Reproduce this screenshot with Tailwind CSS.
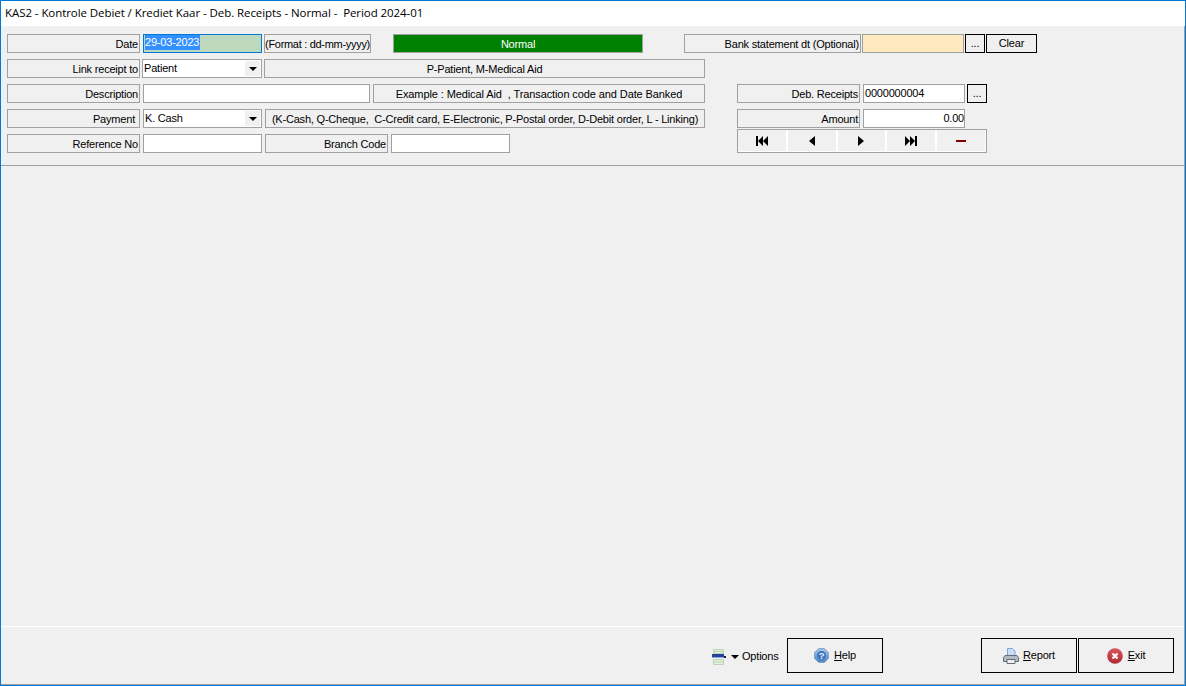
<!DOCTYPE html>
<html lang="en">
<head>
  <meta charset="UTF-8" />
  <title>KAS2</title>
  <script src="https://cdn.jsdelivr.net/npm/@tailwindcss/browser@4"></script>
</head>
<body class="bg-[#f0f0f0] text-black font-['Liberation_Sans',sans-serif] text-[11px] tracking-[-0.2px] overflow-hidden">
  <div class="w-[1186px] h-[686px] flex flex-col border-l border-t border-r border-[#0078d7]">
    <div class="h-[25px] bg-white pl-[4px] pt-[4px] text-[11.5px] tracking-[-0.07px] leading-[16px] whitespace-pre font-['Open_Sans',sans-serif] shrink-0">KAS2 - Kontrole Debiet / Krediet Kaar - Deb. Receipts - Normal -  Period 2024-01</div>

    <div class="flex-1 flex flex-col border-r border-[#a0a0a0]">
      <section class="h-[140px] shrink-0 border-b border-[#a0a0a0] pl-[6px] pt-[8px]">
        <div class="flex h-[19px]">
          <div class="w-[133px] border border-[#a0a0a0] text-right pr-[1px] leading-[19px]">Date</div>
          <div class="ml-[3px] w-[119px] border border-[#0078d7] bg-[#bedabe] leading-[15px] pl-[1px]"><span class="inline-block bg-[#3390ff] text-white w-[55px] h-[15px]">29-03-2023</span></div>
          <div class="ml-[2px] w-[107px] border border-[#a0a0a0] text-center leading-[19px] whitespace-nowrap tracking-[-0.3px]">(Format : dd-mm-yyyy)</div>
          <div class="ml-[22px] w-[250px] border border-[#a0a0a0] bg-[#008000] text-white text-center leading-[18px]">Normal</div>
          <div class="ml-[41px] w-[177px] border border-[#a0a0a0] text-right pr-[1px] leading-[19px]">Bank statement dt (Optional)</div>
          <div class="ml-[1px] w-[102px] border border-[#a0a0a0] bg-[#ffeac0]"></div>
          <div class="ml-[1px] w-5 border border-black text-center leading-[17px]">...</div>
          <div class="ml-[1px] w-[51px] border border-black text-center leading-[17px]">Clear</div>
        </div>
        <div class="flex mt-[6px]">
          <div class="w-[698px] flex flex-col gap-[6px]">
            <div class="flex h-[19px]">
              <div class="w-[133px] border border-[#a0a0a0] text-right pr-[1px] leading-[19px]">Link receipt to</div>
              <div class="ml-[2px] w-[120px] border border-[#a0a0a0] bg-white flex justify-between leading-[16px] pl-[1px]">Patient
                <div class="w-[15px] mr-[1px] my-[1px] bg-[#f0f0f0] flex items-center justify-center"><div class="border-x-[4px] border-t-[4px] border-x-transparent border-t-black"></div></div>
              </div>
              <div class="ml-[2px] w-[441px] border border-[#a0a0a0] text-center leading-[18px]">P-Patient, M-Medical Aid</div>
            </div>
            <div class="flex h-[19px]">
              <div class="w-[133px] border border-[#a0a0a0] text-right pr-[1px] leading-[19px]">Description</div>
              <div class="ml-[3px] w-[227px] border border-[#a0a0a0] bg-white"></div>
              <div class="ml-[3px] w-[332px] border border-[#a0a0a0] text-center leading-[18px] whitespace-pre tracking-[-0.1px]">Example : Medical Aid  , Transaction code and Date Banked</div>
            </div>
            <div class="flex h-[19px]">
              <div class="w-[133px] border border-[#a0a0a0] text-right pr-[4px] leading-[19px]">Payment</div>
              <div class="ml-[3px] w-[119px] border border-[#a0a0a0] bg-white flex justify-between leading-[16px] pl-[1px]">K. Cash
                <div class="w-[15px] mr-[1px] my-[1px] bg-[#f0f0f0] flex items-center justify-center"><div class="border-x-[4px] border-t-[4px] border-x-transparent border-t-black"></div></div>
              </div>
              <div class="ml-[3px] w-[440px] border border-[#a0a0a0] text-center leading-[19px] whitespace-pre">(K-Cash, Q-Cheque,  C-Credit card, E-Electronic, P-Postal order, D-Debit order, L - Linking)</div>
            </div>
            <div class="flex h-[19px]">
              <div class="w-[133px] border border-[#a0a0a0] text-right pr-[1px] leading-[19px]">Reference No</div>
              <div class="ml-[3px] w-[119px] border border-[#a0a0a0] bg-white"></div>
              <div class="ml-[3px] w-[123px] border border-[#a0a0a0] text-right pr-[1px] leading-[19px]">Branch Code</div>
              <div class="ml-[3px] w-[119px] border border-[#a0a0a0] bg-white"></div>
            </div>
          </div>
          <div class="ml-[32px] w-[250px] pt-[25px]">
            <div class="flex h-[19px]">
              <div class="w-[123px] border border-[#a0a0a0] text-right pr-[1px] leading-[19px]">Deb. Receipts</div>
              <div class="ml-[3px] w-[102px] border border-[#a0a0a0] bg-white leading-[16px] pl-[1px]">0000000004</div>
              <div class="ml-[2px] w-5 border border-black text-center leading-[17px]">...</div>
            </div>
            <div class="flex h-[19px] mt-[6px]">
              <div class="w-[123px] border border-[#a0a0a0] text-right pr-[1px] leading-[19px]">Amount</div>
              <div class="ml-[3px] w-[102px] border border-[#a0a0a0] bg-white text-right leading-[16px]">0.00</div>
            </div>
            <div class="mt-[1px] w-[250px] h-[24px] border border-[#a0a0a0] flex gap-[2px] bg-white pr-[1px] pb-[1px]">
              <div class="flex-1 bg-[#f0f0f0] flex items-center justify-center">
                <svg width="12" height="10" viewBox="0 0 12 10"><path d="M0 0h2v10H0zM7 0v10L2 5zM12 0v10L7 5z"/></svg>
              </div>
              <div class="flex-1 bg-[#f0f0f0] flex items-center justify-center">
                <svg width="6" height="10" viewBox="0 0 6 10"><path d="M6 0v10L0 5z"/></svg>
              </div>
              <div class="flex-1 bg-[#f0f0f0] flex items-center justify-center">
                <svg width="6" height="10" viewBox="0 0 6 10"><path d="M0 0v10l6-5z"/></svg>
              </div>
              <div class="flex-1 bg-[#f0f0f0] flex items-center justify-center">
                <svg width="12" height="10" viewBox="0 0 12 10"><path d="M0 0v10l5-5zM5 0v10l5-5zM10 0h2v10h-2z"/></svg>
              </div>
              <div class="flex-1 bg-[#f0f0f0] flex items-center justify-center">
                <div class="w-[10px] h-[2px] bg-[#800000]"></div>
              </div>
            </div>
          </div>
        </div>
      </section>

      <div class="flex-1"></div>

      <footer class="h-[58px] shrink-0 border-t border-white relative">
        <div class="absolute left-[711px] top-[20px] flex items-center">
          <svg width="14" height="16" viewBox="0 0 14 16">
            <path d="M1.5 .5h10v4h-10zM1.5 2.5h10M1.5 10.5h10v5h-10zM1.5 13h10" fill="#e4f0df" stroke="#b9d4b0"/>
            <path d="M0 5h12v3H0z" fill="#23409c"/>
            <path d="M0 8h12v1H0z" fill="#8ea6dc"/>
            <path d="M12 7h2v2h-2z" fill="#222"/>
          </svg>
          <div class="ml-[5px] border-x-[4px] border-t-[4px] border-x-transparent border-t-black"></div>
          <span class="ml-[3px] leading-[19px]">Options</span>
        </div>
        <button class="absolute left-[786px] top-[11px] w-24 h-[35px] border border-black flex items-center justify-center gap-[5px]">
          <svg width="15" height="15" viewBox="0 0 16 16">
            <defs><linearGradient id="helpBlue" x1="0" y1="0" x2="0" y2="1"><stop offset="0" stop-color="#a9c8ea"/><stop offset="1" stop-color="#4d82c4"/></linearGradient></defs>
            <path d="M5 .5h6L15.500 5v6L11 15.500H5L.5 11V5z" fill="url(#helpBlue)" stroke="#7e9fc6"/>
            <circle cx="8" cy="8" r="4.800" fill="#3d74bd"/>
            <text x="8" y="11.500" font-size="10" font-weight="700" text-anchor="middle" fill="#e8f0fa">?</text>
          </svg>
          <span><u>H</u>elp</span>
        </button>
        <button class="absolute left-[980px] top-[11px] w-24 h-[35px] border border-black flex items-center justify-center gap-[4px]">
          <svg width="16" height="16" viewBox="0 0 16 16">
            <path d="M4.500 .5h5l2.500 2.500v5H4.500z" fill="#c9def7" stroke="#7fa6d6"/>
            <path d="M2 7.500h12l1.500 2v4h-15v-4z" fill="#b4bac2" stroke="#666c74"/>
            <path d="M4 11.500h8v4H4z" fill="#eef0f2" stroke="#666c74"/>
          </svg>
          <span><u>R</u>eport</span>
        </button>
        <button class="absolute left-[1077px] top-[11px] w-24 h-[35px] border border-black flex items-center justify-center gap-[5px]">
          <svg width="16" height="16" viewBox="0 0 16 16">
            <defs><linearGradient id="exitRed" x1="0" y1="0" x2="0" y2="1"><stop offset="0" stop-color="#d8575c"/><stop offset="1" stop-color="#ad2a30"/></linearGradient></defs>
            <circle cx="8" cy="8" r="7.800" fill="url(#exitRed)"/>
            <path d="M5.500 5.500l5 5M10.500 5.500l-5 5" stroke="#fff" stroke-width="2.200"/>
          </svg>
          <span><u>E</u>xit</span>
        </button>
      </footer>
    </div>
    <div class="h-[1px] bg-[#a0a0a0] shrink-0"></div>
    <div class="h-[1px] bg-[#0078d7] shrink-0"></div>
  </div>
</body>
</html>
